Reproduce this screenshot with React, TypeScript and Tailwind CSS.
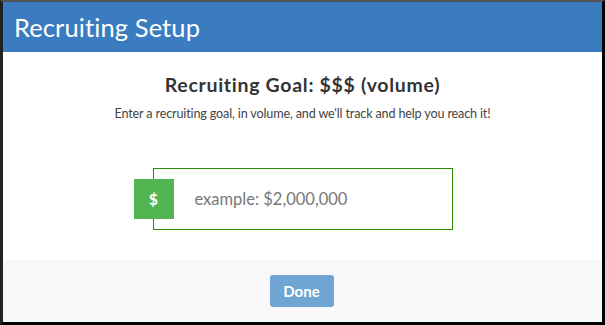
import React from "react";

export default function App() {
  return (
    <div
      className="w-[605px] h-[325px] bg-black border-l-[3px] border-r-[3px] border-b-[3px] border-t-2 border-l-[#222] border-r-black border-b-black border-t-[#555] flex flex-col"
      style={{ fontFamily: "Lato, 'Open Sans', sans-serif" }}
    >
      <div className="h-[50px] bg-[#3b7bbf] flex items-center pl-[11px]">
        <span className="text-white text-[25.5px] leading-none tracking-[0.1px] mt-[1px]">Recruiting Setup</span>
      </div>
      <div className="flex-1 bg-white flex flex-col items-center">
        <div className="mt-[23px] text-[19.5px] font-bold text-[#333] leading-none tracking-[0.7px]">
          Recruiting Goal: $$$ (volume)
        </div>
        <div className="mt-[13px] text-[12.6px] text-[#444] leading-none tracking-[-0.15px]">
          Enter a recruiting goal, in volume, and we'll track and help you reach it!
        </div>
        <div className="mt-[48px] relative w-[300px] h-[62px] border border-[#2e8a00] flex items-center">
          <div className="absolute left-[-20px] top-[10px] w-[40px] h-[40px] bg-[#52b552] flex items-center justify-center text-white font-bold text-[16px]">
            $
          </div>
          <span className="ml-[41px] text-[16.5px] text-[#777]">example: $2,000,000</span>
        </div>
      </div>
      <div className="h-[62px] bg-[#f8f8f8] flex items-center justify-center">
        <button className="w-[64px] h-[32px] rounded-[3px] bg-[#6ea5d3] text-white font-bold text-[15px] mr-[2px]">
          Done
        </button>
      </div>
    </div>
  );
}
